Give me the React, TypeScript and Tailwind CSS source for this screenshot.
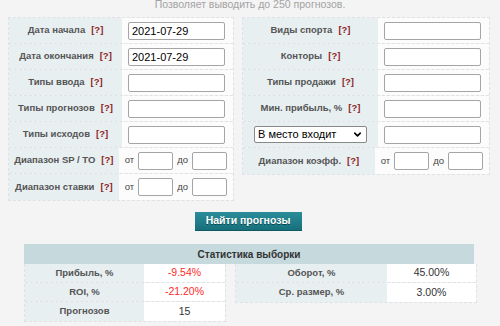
import { ChevronDown } from "lucide-react";

const Help = () => <span className="ml-[6px] text-[#8e1f1f]">[?]</span>;

const Field = ({ value = "" }: { value?: string }) => (
  <input
    readOnly
    value={value}
    className="w-[97px] h-[18px] px-[3px] border border-[#a5a5a5] rounded-[2px] bg-white text-[11px] text-black outline-none"
  />
);

const Range = () => (
  <div className="flex items-center gap-[4px] text-[9.5px] text-[#444]">
    <span>от</span>
    <input readOnly className="w-[35px] h-[18px] border border-[#a5a5a5] rounded-[2px] bg-white" />
    <span>до</span>
    <input readOnly className="w-[35px] h-[18px] border border-[#a5a5a5] rounded-[2px] bg-white" />
  </div>
);

type Row = { label?: string; select?: boolean; right: React.ReactNode };

const FormTable = ({ rows, labelW }: { rows: Row[]; labelW: string }) => (
  <div className="border border-dashed border-[#dde3e5]">
    {rows.map((r, i) => (
      <div key={i} className="flex h-[26px] border-b border-dashed border-[#dde3e5] last:border-b-0">
        <div className={`${labelW} flex items-center justify-center bg-[#e8eff1] text-[9.5px] font-bold text-[#555]`}>
          {r.select ? (
            <div className="w-[113px] h-[17px] flex items-center justify-between px-[3px] border border-[#888] rounded-[2px] bg-white text-[11px] font-normal text-black">
              <span>В место входит</span>
              <ChevronDown size={11} strokeWidth={3.5} />
            </div>
          ) : (
            <span>
              {r.label}
              <Help />
            </span>
          )}
        </div>
        <div className="flex-1 flex items-center px-[6px] bg-[#fcfcfc]">{r.right}</div>
      </div>
    ))}
  </div>
);

const leftRows: Row[] = [
  { label: "Дата начала", right: <Field value="2021-07-29" /> },
  { label: "Дата окончания", right: <Field value="2021-07-29" /> },
  { label: "Типы ввода", right: <Field /> },
  { label: "Типы прогнозов", right: <Field /> },
  { label: "Типы исходов", right: <Field /> },
  { label: "Диапазон SP / TO", right: <Range /> },
  { label: "Диапазон ставки", right: <Range /> },
];

const rightRows: Row[] = [
  { label: "Виды спорта", right: <Field /> },
  { label: "Конторы", right: <Field /> },
  { label: "Типы продажи", right: <Field /> },
  { label: "Мин. прибыль, %", right: <Field /> },
  { select: true, right: <Field /> },
  { label: "Диапазон коэфф.", right: <Range /> },
];

type Stat = { label: string; value: string; red?: boolean };

const StatBlock = ({ rows, labelW, valueW }: { rows: Stat[]; labelW: string; valueW: string }) => (
  <div className="self-start border border-dashed border-[#dde3e5] border-t-0">
    {rows.map((s) => (
      <div key={s.label} className="flex h-[19px] border-b border-dashed border-[#dde3e5] last:border-b-0">
        <div className={`${labelW} flex items-center justify-center bg-[#e8eff1] text-[9.5px] font-bold text-[#555]`}>
          {s.label}
        </div>
        <div
          className={`${valueW} flex items-center justify-center bg-white text-[10.5px] ${
            s.red ? "text-[#ff2a2a]" : "text-[#333]"
          }`}
        >
          {s.value}
        </div>
      </div>
    ))}
  </div>
);

export default function App() {
  return (
    <div className="min-h-screen bg-[#f4f4f4] font-['Liberation_Sans',Arial,sans-serif] overflow-hidden">
      <p className="h-[20px] -mt-[3px] text-center text-[10.5px] leading-[14px] text-[#a3a3a3]">
        Позволяет выводить до 250 прогнозов.
      </p>

      <div className="flex gap-[8px] pl-[8px]">
        <div className="w-[226px]">
          <FormTable rows={leftRows} labelW="w-[113px]" />
        </div>
        <div className="w-[248px] self-start">
          <FormTable rows={rightRows} labelW="w-[135px]" />
        </div>
      </div>

      <div className="flex justify-center mt-[11px] pr-[4px]">
        <button className="w-[107px] h-[19px] bg-gradient-to-b from-[#2b8d9a] to-[#16707c] border-b border-[#0e5861] text-white text-[10.5px] font-bold [text-shadow:0_1px_0_#0b4a52]">
          Найти прогнозы
        </button>
      </div>

      <div className="w-[450px] ml-[24px] mt-[13px]">
        <div className="h-[20px] flex items-center justify-center bg-[#c6d9dd] text-[10px] font-bold text-[#333]">
          Статистика выборки
        </div>
        <div className="flex gap-[9px]">
          <StatBlock
            labelW="w-[119px]"
            valueW="w-[81px]"
            rows={[
              { label: "Прибыль, %", value: "-9.54%", red: true },
              { label: "ROI, %", value: "-21.20%", red: true },
              { label: "Прогнозов", value: "15" },
            ]}
          />
          <StatBlock
            labelW="w-[151px]"
            valueW="w-[89px]"
            rows={[
              { label: "Оборот, %", value: "45.00%" },
              { label: "Ср. размер, %", value: "3.00%" },
            ]}
          />
        </div>
      </div>
    </div>
  );
}
